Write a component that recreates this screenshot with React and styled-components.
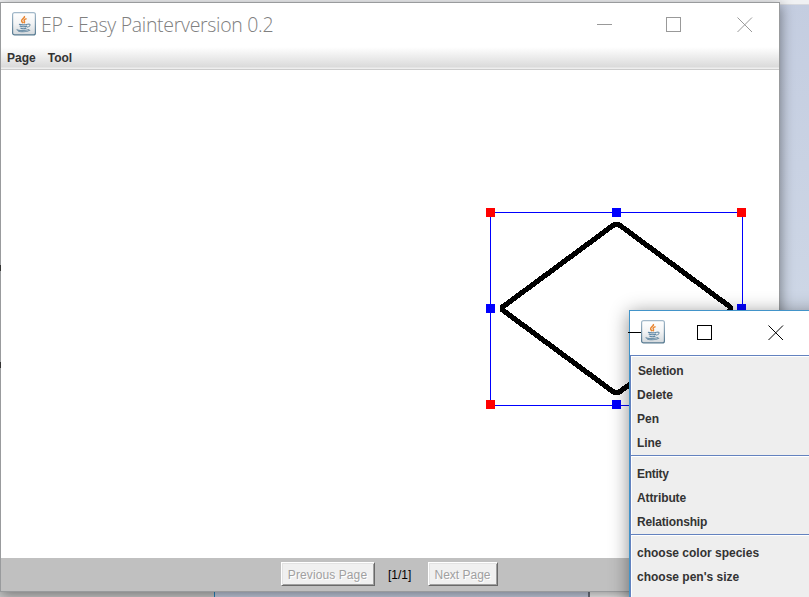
import React from "react";
import styled, { createGlobalStyle } from "styled-components";

const GlobalStyle = createGlobalStyle`
  * { box-sizing: border-box; }
  body { margin: 0; overflow: hidden; font-family: "Liberation Sans", Arial, sans-serif; }
`;

const Desktop = styled.main`
  position: relative;
  width: 809px;
  height: 597px;
  overflow: hidden;
  background: linear-gradient(#c4cde0, #ced7e6 55%, #c4cddf);
`;

const BackStrip = styled.div`
  height: 5px;
  background: #f0f1f3;
  border-bottom: 1px solid #d8dadf;
`;

const BackWindow = styled.div`
  position: absolute;
  left: ${(p) => p.$x}px;
  top: 580px;
  width: ${(p) => p.$w}px;
  height: 17px;
  background: ${(p) => p.$fill};
  border-right: ${(p) => p.$edge};
`;

const EdgeMark = styled.div`
  position: absolute;
  left: 0;
  top: ${(p) => p.$y}px;
  width: 1px;
  height: 6px;
  background: #333;
`;

const PainterWindow = styled.section`
  position: absolute;
  left: 0;
  top: 2px;
  width: 780px;
  height: 590px;
  display: flex;
  flex-direction: column;
  background: #fff;
  border: 1px solid #999b9d;
  box-shadow: 1px 3px 12px rgba(0, 0, 0, 0.42);
`;

const TitleBar = styled.header`
  display: flex;
  align-items: center;
  height: 44px;
  padding: 0 26px 2px 11px;
`;

const Title = styled.h1`
  flex: 1;
  margin: 1px 0 0 5px;
  font: 300 19.5px/26px "Open Sans", "Noto Sans", sans-serif;
  letter-spacing: -0.31px;
  color: #808080;
  white-space: nowrap;
`;

const Controls = styled.div`
  display: flex;
  gap: ${(p) => p.$gap}px;
  margin-top: 2px;
  color: ${(p) => p.$color};
`;

const ControlIcon = styled.svg`
  display: block;
  width: 16px;
  height: 16px;
  fill: none;
  stroke: currentColor;
`;

const ControlSlot = styled.div`
  width: ${(p) => p.$w}px;
`;

const MenuBar = styled.nav`
  display: flex;
  gap: 12px;
  height: 23px;
  padding: 4px 6px 0;
  background: linear-gradient(#fff, #dadada 20px, #eee 21px);
  border-bottom: 1px solid #ccc;
`;

const MenuTitle = styled.span`
  font-weight: bold;
  font-size: 12px;
  line-height: 15px;
  color: #333;
`;

const Canvas = styled.div`
  flex: 1;
  min-height: 0;
`;

const Drawing = styled.svg`
  display: block;
  width: 778px;
  height: 488px;
`;

const Pager = styled.footer`
  display: flex;
  align-items: flex-start;
  gap: 13px;
  height: 33px;
  padding: 4px 0 0 280px;
  background: #c0c0c0;
`;

const PageButton = styled.button`
  width: ${(p) => p.$w}px;
  height: 24px;
  padding: 1px 1px 0 0;
  border: 1px solid;
  border-color: #fff #696969 #696969 #fff;
  border-radius: 0;
  background: #f0f0f0;
  box-shadow: inset 1px 1px #e3e3e3, inset -1px -1px #a0a0a0;
  color: #a0a0a0;
  text-shadow: 1px 1px #fff;
  font: 12px/18px "Liberation Sans", Arial, sans-serif;
  letter-spacing: ${(p) => p.$tracking || 0}px;
  white-space: nowrap;
`;

const PageCount = styled.span`
  width: 27px;
  font-size: 12px;
  line-height: 26px;
  color: #000;
`;

const ToolWindow = styled.section`
  position: absolute;
  left: 629px;
  top: 310px;
  width: 300px;
  height: 400px;
  background: #fff;
  border: 1px solid #4294c9;
  box-shadow: 0 3px 18px rgba(0, 0, 0, 0.45);
`;

const ToolTitle = styled.header`
  display: flex;
  align-items: center;
  height: 44px;
  padding: 0 0 3px 11px;
  gap: 32px;
`;

const MinimizeStub = styled.div`
  position: absolute;
  left: -2px;
  top: 21px;
  width: 13px;
  height: 1px;
  background: #000;
`;

const ToolList = styled.div`
  height: 360px;
  background: #eee;
  border-left: 1px solid #6382bf;
  color: #333;
`;

const ToolGroup = styled.div`
  padding: ${(p) => p.$top}px 0 0 6px;
  height: ${(p) => p.$h}px;
  border-top: 1px solid #6382bf;
  box-shadow: inset 1px 1px #fff;
`;

const ToolItem = styled.div`
  height: 24px;
  padding-left: ${(p) => p.$indent || 0}px;
  font-weight: bold;
  font-size: 12px;
  line-height: 24px;
  letter-spacing: ${(p) => p.$tracking || 0}px;
  white-space: nowrap;
`;

const JavaSvg = styled.svg`
  flex: none;
  display: block;
`;

function JavaIcon({ id }) {
  return (
    <JavaSvg width="24" height="24" viewBox="0 0 24 24" fill="none">
      <defs>
        <linearGradient id={id} x2="0" y2="1">
          <stop stopColor="#fff" />
          <stop offset="0.5" stopColor="#f3f4f5" />
          <stop offset="1" stopColor="#d3d8dc" />
        </linearGradient>
        <linearGradient id={id + "-edge"} x2="0" y2="1">
          <stop stopColor="#a3b9ca" />
          <stop offset="1" stopColor="#557990" />
        </linearGradient>
      </defs>
      <rect x="0.6" y="0.6" width="22.8" height="22.3" rx="2" fill={`url(#${id})`} stroke={`url(#${id}-edge)`} strokeWidth="1.2" />
      <path d="M12.4 4c1.2 2.3-4 3-2.7 5.4.4.8 1 1 1.3 1.8M14.6 6.6c-3.6 1.3-2.4 2.2-2.1 3 .2.7-.2 1.2-.7 1.6" stroke="#e98632" strokeWidth="1.5" />
      <path d="M7 12.3c1.2.7 6.8.8 8.7 0M7.7 14.1c1.5.8 5.6.8 7.4 0M8.4 15.9c1.5.8 4.6.8 6 0" stroke="#5f87a5" strokeWidth="1.15" />
      <path d="M15.6 12.3c3.6-.8 3.1 2.3-.5 3M5.4 17.2c-2.4 1.5 7.3 2 11.8.3M6.2 19.2c4.2.7 10 .3 12-1.1" stroke="#7293aa" strokeWidth="1.1" />
    </JavaSvg>
  );
}

const MinimizeIcon = () => (
  <ControlIcon viewBox="0 0 16 16"><path d="M0 7.5h15" /></ControlIcon>
);
const MaximizeIcon = () => (
  <ControlIcon viewBox="0 0 16 16"><rect x="0.5" y="0.5" width="14" height="14" /></ControlIcon>
);
const CloseIcon = () => (
  <ControlIcon viewBox="0 0 16 16"><path d="M.5.5 15 15M15 .5.5 15" /></ControlIcon>
);

const handles = [
  [485, 138, "#f00"], [611, 138, "#00f"], [736, 138, "#f00"],
  [485, 234, "#00f"], [736, 234, "#00f"],
  [485, 330, "#f00"], [611, 330, "#00f"], [736, 330, "#f00"],
];

export default function App() {
  return (
    <>
      <GlobalStyle />
      <Desktop>
        <BackStrip />
        <BackWindow $x={0} $w={215} $fill="#c9c9c9" $edge="1px solid #2685c0" />
        <BackWindow $x={588} $w={45} $fill="#f1f1f1" $edge="0" />
        <BackWindow $x={580} $w={10} $fill="#c4cddf" $edge="2px solid #6d7480" />
        <PainterWindow>
          <TitleBar>
            <JavaIcon id="painter-java" />
            <Title>EP - Easy Painterversion 0.2</Title>
            <Controls $color="#999" $gap={54}>
              <ControlSlot $w={15}><MinimizeIcon /></ControlSlot>
              <ControlSlot $w={17}><MaximizeIcon /></ControlSlot>
              <CloseIcon />
            </Controls>
          </TitleBar>
          <MenuBar>
            <MenuTitle>Page</MenuTitle>
            <MenuTitle>Tool</MenuTitle>
          </MenuBar>
          <Canvas>
            <Drawing viewBox="0 0 778 488" shapeRendering="crispEdges">
              <rect x="489.5" y="142.5" width="252" height="193" fill="none" stroke="#00f" />
              <path d="M501.5 237 613.5 154.3h4L729.3 237v3L617.5 322.7h-4L501.5 240Z" fill="none" stroke="#000" strokeWidth="5.2" strokeLinejoin="round" />
              {handles.map(([x, y, color]) => (
                <rect key={`${x}-${y}`} x={x} y={y} width="9" height="9" fill={color} />
              ))}
            </Drawing>
          </Canvas>
          <Pager>
            <PageButton $w={94} $tracking={0.1} disabled>Previous Page</PageButton>
            <PageCount>[1/1]</PageCount>
            <PageButton $w={70} disabled>Next Page</PageButton>
          </Pager>
        </PainterWindow>
        <EdgeMark $y={265} />
        <EdgeMark $y={362} />
        <ToolWindow>
          <ToolTitle>
            <JavaIcon id="tool-java" />
            <Controls $color="#000" $gap={55}>
              <MaximizeIcon />
              <CloseIcon />
            </Controls>
          </ToolTitle>
          <MinimizeStub />
          <ToolList>
            <ToolGroup $h={100} $top={3}>
              <ToolItem $indent={1} $tracking={-0.15}>Seletion</ToolItem>
              <ToolItem>Delete</ToolItem>
              <ToolItem>Pen</ToolItem>
              <ToolItem $tracking={-0.1}>Line</ToolItem>
            </ToolGroup>
            <ToolGroup $h={79} $top={6}>
              <ToolItem $tracking={-0.3}>Entity</ToolItem>
              <ToolItem $tracking={-0.1}>Attribute</ToolItem>
              <ToolItem $tracking={-0.15}>Relationship</ToolItem>
            </ToolGroup>
            <ToolGroup $h={90} $top={6}>
              <ToolItem>choose color species</ToolItem>
              <ToolItem>choose pen's size</ToolItem>
            </ToolGroup>
          </ToolList>
        </ToolWindow>
      </Desktop>
    </>
  );
}
